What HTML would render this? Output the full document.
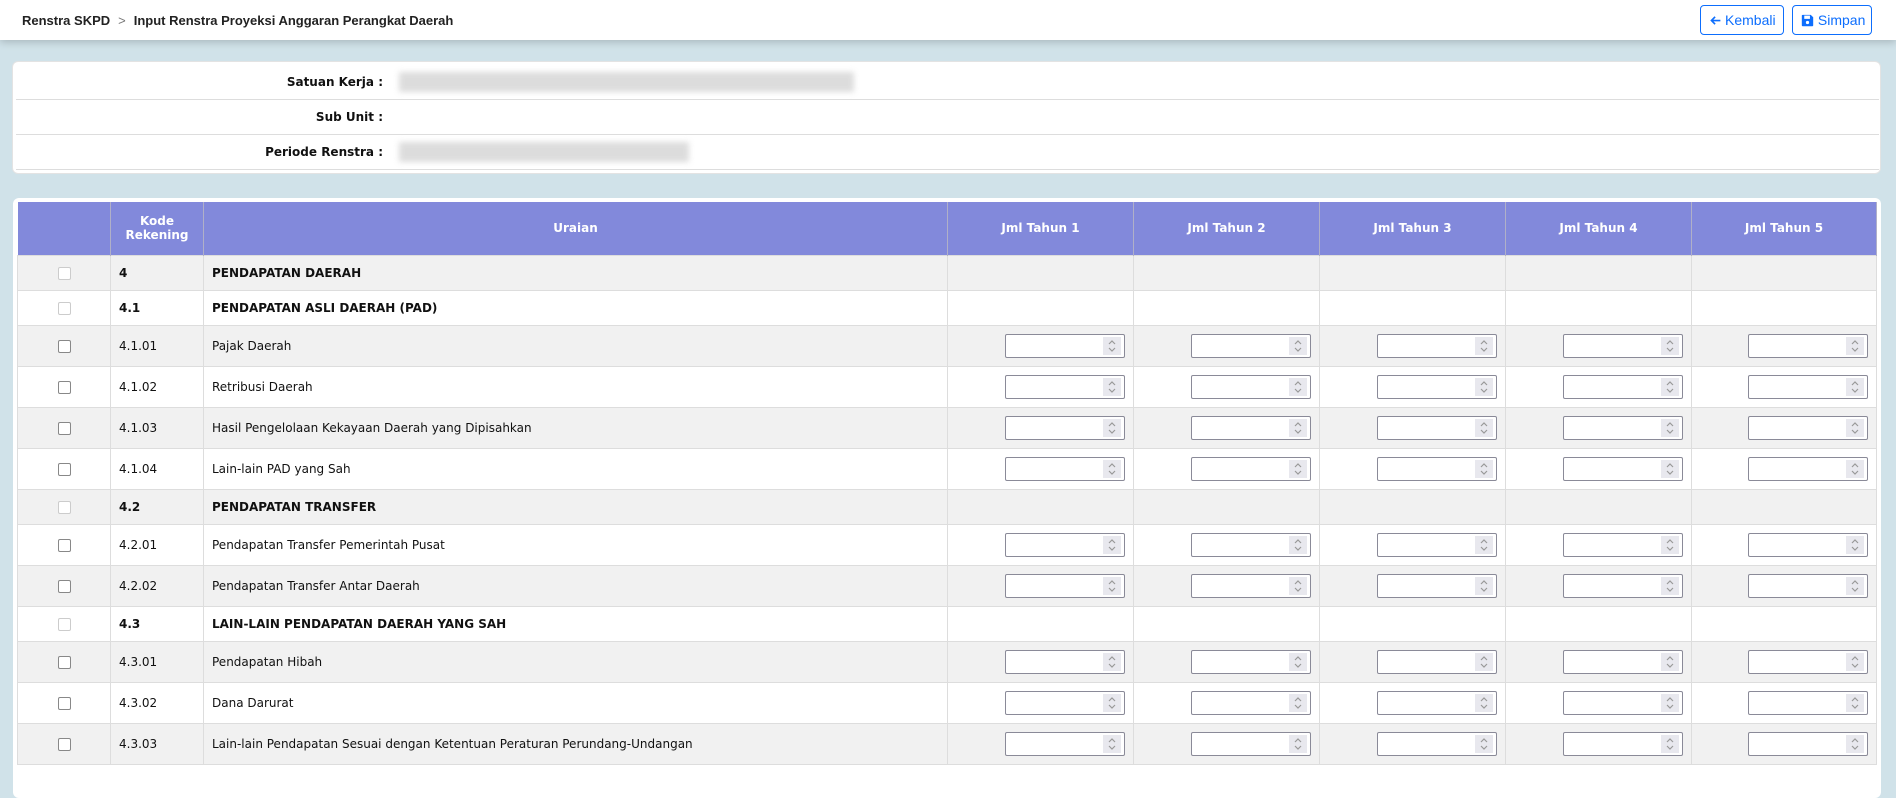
<!DOCTYPE html><html><head><style>
*{box-sizing:border-box}
body{margin:0;width:1896px;height:762px;overflow:hidden;background:#d0e2e9;font-family:"DejaVu Sans",Verdana,sans-serif;font-size:12px;color:#111}
.top{position:absolute;left:0;top:0;width:1896px;height:40px;background:#fff;box-shadow:0 2px 8px rgba(0,0,0,.2)}
.bc{position:absolute;left:22px;top:13px;font-family:"Liberation Sans",sans-serif;font-weight:bold;font-size:13px;color:#222}
.bc span{font-weight:normal;color:#777;margin:0 8px}
.btn{position:absolute;top:5px;height:30px;border:1px solid #0d6efd;border-radius:4px;color:#0d6efd;font-family:"Liberation Sans",sans-serif;font-size:14px;line-height:28px;padding-left:8px;background:#fff;white-space:nowrap}
.card{position:absolute;left:12px;top:61px;width:1869px;height:113px;background:#fff;border-radius:6px;border:1px solid #e3e3e3}
.ir{position:absolute;left:3px;width:1863px;height:35px;border-bottom:1px solid #ddd}
.ir b{position:absolute;right:1496px;top:10px;font-size:12px}
.blur{position:absolute;left:383px;top:7px;height:20px;background:#d4d4d4;filter:blur(3px);opacity:.8}
.tc{position:absolute;left:13px;top:198px;width:1868px;height:600px;background:#fff;border-radius:6px;padding:4px}
table{border-collapse:collapse;table-layout:fixed;width:1859px}
th{background:#8289db;color:#fff;font-weight:bold;height:53px;border-right:1px solid #b0b0c8;font-size:12px}
td{border:1px solid #ddd;height:41px;padding:0 8px;vertical-align:middle}
tr.b td{height:35px;font-weight:bold}
tr:nth-child(even) td{background:#f1f1f1}
td.c{text-align:center;padding:0}
.cb{display:inline-block;width:13px;height:13px;border:1px solid #888;border-radius:2px;background:#fff;vertical-align:middle}
tr.b .cb{border-color:#ccc}
td.n{text-align:right}
.in{display:inline-block;width:120px;height:24px;border:1px solid #8a8a98;border-radius:2px;background:#fff;position:relative;vertical-align:middle}
.in i{position:absolute;right:3px;top:2px;width:18px;height:18px;background:#e8e8ee}
</style></head><body>
<svg width="0" height="0" style="position:absolute"><defs><symbol id="sp" viewBox="0 0 18 18"><path d="M6 7l3-3 3 3M6 11l3 3 3-3" fill="none" stroke="#999" stroke-width="1.2"/></symbol></defs></svg>
<div class="top"><div class="bc">Renstra SKPD<span>&gt;</span>Input Renstra Proyeksi Anggaran Perangkat Daerah</div>
<div class="btn" style="left:1700px;width:84px"><svg width="13" height="13" viewBox="0 0 16 16" style="vertical-align:-2px;margin-right:3px"><path d="M14 8H3M7.5 3.5L3 8l4.5 4.5" fill="none" stroke="#0d6efd" stroke-width="2"/></svg>Kembali</div>
<div class="btn" style="left:1792px;width:80px"><svg width="13" height="13" viewBox="0 0 16 16" style="vertical-align:-2px"><path d="M1 2a1 1 0 0 1 1-1h10l3 3v10a1 1 0 0 1-1 1H2a1 1 0 0 1-1-1z" fill="#0d6efd"/><rect x="4" y="2" width="7" height="4" fill="#fff"/><circle cx="8" cy="10.5" r="2" fill="#fff"/></svg> Simpan</div></div>
<div class="card">
<div class="ir" style="top:3px"><b>Satuan Kerja :</b><div class="blur" style="width:455px"></div></div>
<div class="ir" style="top:38px"><b>Sub Unit :</b></div>
<div class="ir" style="top:73px"><b>Periode Renstra :</b><div class="blur" style="width:290px"></div></div>
</div>
<div class="tc"><table>
<colgroup><col style="width:93px"><col style="width:93px"><col style="width:744px"><col style="width:186px"><col style="width:186px"><col style="width:186px"><col style="width:186px"><col style="width:185px"></colgroup>
<tr><th></th><th>Kode<br>Rekening</th><th>Uraian</th><th>Jml Tahun 1</th><th>Jml Tahun 2</th><th>Jml Tahun 3</th><th>Jml Tahun 4</th><th>Jml Tahun 5</th></tr>
<tr class="b"><td class="c"><span class="cb"></span></td><td>4</td><td>PENDAPATAN DAERAH</td><td></td><td></td><td></td><td></td><td></td></tr>
<tr class="b"><td class="c"><span class="cb"></span></td><td>4.1</td><td>PENDAPATAN ASLI DAERAH (PAD)</td><td></td><td></td><td></td><td></td><td></td></tr>
<tr><td class="c"><span class="cb"></span></td><td>4.1.01</td><td>Pajak Daerah</td><td class="n"><span class="in"><i><svg width="18" height="18"><use href="#sp"/></svg></i></span></td><td class="n"><span class="in"><i><svg width="18" height="18"><use href="#sp"/></svg></i></span></td><td class="n"><span class="in"><i><svg width="18" height="18"><use href="#sp"/></svg></i></span></td><td class="n"><span class="in"><i><svg width="18" height="18"><use href="#sp"/></svg></i></span></td><td class="n"><span class="in"><i><svg width="18" height="18"><use href="#sp"/></svg></i></span></td></tr>
<tr><td class="c"><span class="cb"></span></td><td>4.1.02</td><td>Retribusi Daerah</td><td class="n"><span class="in"><i><svg width="18" height="18"><use href="#sp"/></svg></i></span></td><td class="n"><span class="in"><i><svg width="18" height="18"><use href="#sp"/></svg></i></span></td><td class="n"><span class="in"><i><svg width="18" height="18"><use href="#sp"/></svg></i></span></td><td class="n"><span class="in"><i><svg width="18" height="18"><use href="#sp"/></svg></i></span></td><td class="n"><span class="in"><i><svg width="18" height="18"><use href="#sp"/></svg></i></span></td></tr>
<tr><td class="c"><span class="cb"></span></td><td>4.1.03</td><td>Hasil Pengelolaan Kekayaan Daerah yang Dipisahkan</td><td class="n"><span class="in"><i><svg width="18" height="18"><use href="#sp"/></svg></i></span></td><td class="n"><span class="in"><i><svg width="18" height="18"><use href="#sp"/></svg></i></span></td><td class="n"><span class="in"><i><svg width="18" height="18"><use href="#sp"/></svg></i></span></td><td class="n"><span class="in"><i><svg width="18" height="18"><use href="#sp"/></svg></i></span></td><td class="n"><span class="in"><i><svg width="18" height="18"><use href="#sp"/></svg></i></span></td></tr>
<tr><td class="c"><span class="cb"></span></td><td>4.1.04</td><td>Lain-lain PAD yang Sah</td><td class="n"><span class="in"><i><svg width="18" height="18"><use href="#sp"/></svg></i></span></td><td class="n"><span class="in"><i><svg width="18" height="18"><use href="#sp"/></svg></i></span></td><td class="n"><span class="in"><i><svg width="18" height="18"><use href="#sp"/></svg></i></span></td><td class="n"><span class="in"><i><svg width="18" height="18"><use href="#sp"/></svg></i></span></td><td class="n"><span class="in"><i><svg width="18" height="18"><use href="#sp"/></svg></i></span></td></tr>
<tr class="b"><td class="c"><span class="cb"></span></td><td>4.2</td><td>PENDAPATAN TRANSFER</td><td></td><td></td><td></td><td></td><td></td></tr>
<tr><td class="c"><span class="cb"></span></td><td>4.2.01</td><td>Pendapatan Transfer Pemerintah Pusat</td><td class="n"><span class="in"><i><svg width="18" height="18"><use href="#sp"/></svg></i></span></td><td class="n"><span class="in"><i><svg width="18" height="18"><use href="#sp"/></svg></i></span></td><td class="n"><span class="in"><i><svg width="18" height="18"><use href="#sp"/></svg></i></span></td><td class="n"><span class="in"><i><svg width="18" height="18"><use href="#sp"/></svg></i></span></td><td class="n"><span class="in"><i><svg width="18" height="18"><use href="#sp"/></svg></i></span></td></tr>
<tr><td class="c"><span class="cb"></span></td><td>4.2.02</td><td>Pendapatan Transfer Antar Daerah</td><td class="n"><span class="in"><i><svg width="18" height="18"><use href="#sp"/></svg></i></span></td><td class="n"><span class="in"><i><svg width="18" height="18"><use href="#sp"/></svg></i></span></td><td class="n"><span class="in"><i><svg width="18" height="18"><use href="#sp"/></svg></i></span></td><td class="n"><span class="in"><i><svg width="18" height="18"><use href="#sp"/></svg></i></span></td><td class="n"><span class="in"><i><svg width="18" height="18"><use href="#sp"/></svg></i></span></td></tr>
<tr class="b"><td class="c"><span class="cb"></span></td><td>4.3</td><td>LAIN-LAIN PENDAPATAN DAERAH YANG SAH</td><td></td><td></td><td></td><td></td><td></td></tr>
<tr><td class="c"><span class="cb"></span></td><td>4.3.01</td><td>Pendapatan Hibah</td><td class="n"><span class="in"><i><svg width="18" height="18"><use href="#sp"/></svg></i></span></td><td class="n"><span class="in"><i><svg width="18" height="18"><use href="#sp"/></svg></i></span></td><td class="n"><span class="in"><i><svg width="18" height="18"><use href="#sp"/></svg></i></span></td><td class="n"><span class="in"><i><svg width="18" height="18"><use href="#sp"/></svg></i></span></td><td class="n"><span class="in"><i><svg width="18" height="18"><use href="#sp"/></svg></i></span></td></tr>
<tr><td class="c"><span class="cb"></span></td><td>4.3.02</td><td>Dana Darurat</td><td class="n"><span class="in"><i><svg width="18" height="18"><use href="#sp"/></svg></i></span></td><td class="n"><span class="in"><i><svg width="18" height="18"><use href="#sp"/></svg></i></span></td><td class="n"><span class="in"><i><svg width="18" height="18"><use href="#sp"/></svg></i></span></td><td class="n"><span class="in"><i><svg width="18" height="18"><use href="#sp"/></svg></i></span></td><td class="n"><span class="in"><i><svg width="18" height="18"><use href="#sp"/></svg></i></span></td></tr>
<tr><td class="c"><span class="cb"></span></td><td>4.3.03</td><td>Lain-lain Pendapatan Sesuai dengan Ketentuan Peraturan Perundang-Undangan</td><td class="n"><span class="in"><i><svg width="18" height="18"><use href="#sp"/></svg></i></span></td><td class="n"><span class="in"><i><svg width="18" height="18"><use href="#sp"/></svg></i></span></td><td class="n"><span class="in"><i><svg width="18" height="18"><use href="#sp"/></svg></i></span></td><td class="n"><span class="in"><i><svg width="18" height="18"><use href="#sp"/></svg></i></span></td><td class="n"><span class="in"><i><svg width="18" height="18"><use href="#sp"/></svg></i></span></td></tr>
</table></div>
</body></html>
